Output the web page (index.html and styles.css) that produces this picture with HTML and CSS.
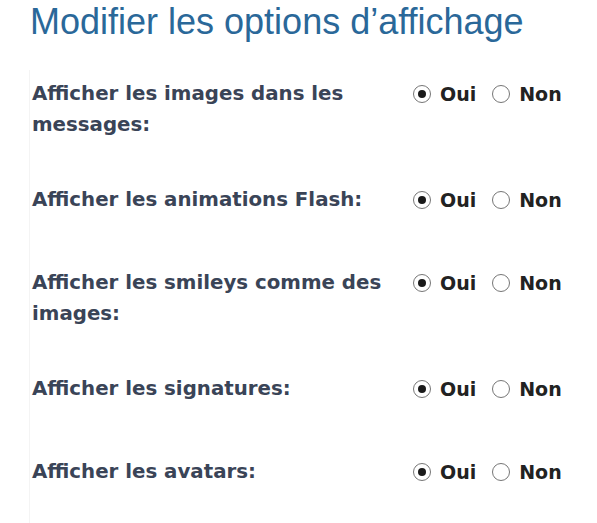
FILE: index.html
```html
<!DOCTYPE html>
<html lang="fr">
<head>
<meta charset="utf-8">
<title>Modifier les options d’affichage</title>
<link rel="stylesheet" href="styles.css">
</head>
<body>
<div class="page">
  <h1 class="title">Modifier les options d’affichage</h1>
  <div class="panel">
    <div class="row">
      <div class="label">Afficher les images dans les messages:</div>
      <div class="choices">
        <label class="choice"><span class="radio checked"></span>Oui</label>
        <label class="choice"><span class="radio"></span>Non</label>
      </div>
    </div>
    <div class="row">
      <div class="label">Afficher les animations Flash:</div>
      <div class="choices">
        <label class="choice"><span class="radio checked"></span>Oui</label>
        <label class="choice"><span class="radio"></span>Non</label>
      </div>
    </div>
    <div class="row">
      <div class="label">Afficher les smileys comme des images:</div>
      <div class="choices">
        <label class="choice"><span class="radio checked"></span>Oui</label>
        <label class="choice"><span class="radio"></span>Non</label>
      </div>
    </div>
    <div class="row">
      <div class="label">Afficher les signatures:</div>
      <div class="choices">
        <label class="choice"><span class="radio checked"></span>Oui</label>
        <label class="choice"><span class="radio"></span>Non</label>
      </div>
    </div>
    <div class="row">
      <div class="label">Afficher les avatars:</div>
      <div class="choices">
        <label class="choice"><span class="radio checked"></span>Oui</label>
        <label class="choice"><span class="radio"></span>Non</label>
      </div>
    </div>
  </div>
</div>
</body>
</html>
```

FILE: styles.css
```css
html, body {
  margin: 0;
  padding: 0;
  background: #ffffff;
  overflow: hidden;
}

.page {
  padding-left: 29px;
  min-height: 523px;
  display: flex;
  flex-direction: column;
}

.title {
  flex-shrink: 0;
  margin: 0 0 0 1px;
  padding-top: 1px;
  font-family: "Liberation Sans", Arial, sans-serif;
  font-weight: normal;
  font-size: 36px;
  line-height: 41px;
  color: #2a6899;
  height: 70px;
  box-sizing: border-box;
}

.panel {
  flex: 1;
  border-left: 1px solid #f4f4f4;
  padding: 8px 0 0 2px;
}

.row {
  display: grid;
  grid-template-columns: 381px auto;
  margin-bottom: 44px;
  min-height: 39px;
}

.row:last-child {
  margin-bottom: 0;
}

.label {
  font-family: "DejaVu Sans", Verdana, sans-serif;
  font-weight: bold;
  font-size: 19.8px;
  line-height: 31px;
  color: #3a4457;
  padding-right: 20px;
}

.choices {
  display: flex;
  align-items: center;
  height: 31px;
  font-family: "DejaVu Sans", Verdana, sans-serif;
  font-weight: bold;
  font-size: 19px;
  color: #222222;
}

.choice {
  display: flex;
  align-items: center;
  margin-right: 16px;
}

.radio {
  width: 16px;
  height: 16px;
  border: 1px solid #767676;
  border-radius: 50%;
  margin-right: 9px;
  position: relative;
  background: #fff;
}

.radio.checked::after {
  content: "";
  position: absolute;
  left: 4px;
  top: 4px;
  width: 8px;
  height: 8px;
  border-radius: 50%;
  background: #1a1a1a;
}
```
